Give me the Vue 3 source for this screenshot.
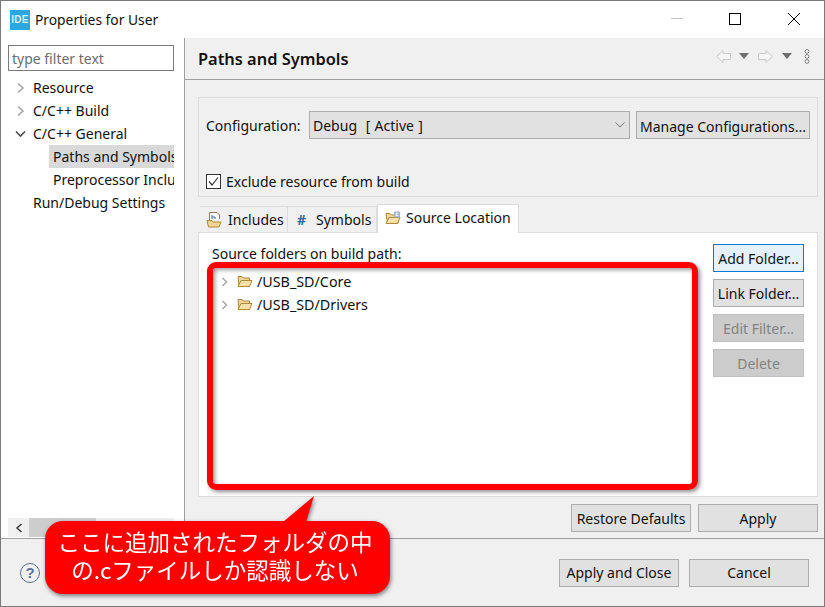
<template>
  <div class="win">
    <header class="titlebar">
      <span class="logo">IDE</span>
      <span class="wintitle">Properties for User</span>
      <div class="winctl">
        <svg class="ctl" width="58" height="38" viewBox="0 0 58 38"><path d="M1 18.500H13" stroke="#c4c4c4" fill="none"/></svg>
        <svg class="ctl" width="59" height="38" viewBox="0 0 59 38"><rect x="1.500" y="13.500" width="11" height="11" stroke="#000" fill="none"/></svg>
        <svg class="ctl" width="25" height="38" viewBox="0 0 25 38"><path d="M1 13L13 25M13 13L1 25" stroke="#000" fill="none"/></svg>
      </div>
    </header>
    <div class="main">
      <aside class="side">
        <div class="filter">type filter text</div>
        <ul class="tree">
          <li v-for="n in nav" :key="n.label" class="navrow" :class="{ sel: n.sel, deep: n.deep }">
            <svg v-if="n.state" class="navchev" width="12" height="12" viewBox="0 0 12 12">
              <path v-if="n.state === 'closed'" d="M3 1.500L8 6L3 10.500" stroke="#a6a6a6" stroke-width="1.600" fill="none"/>
              <path v-else d="M1 3.500L5.500 8L10 3.500" stroke="#4d4d4d" stroke-width="1.600" fill="none"/>
            </svg>
            <span class="navlabel">{{ n.label }}</span>
          </li>
        </ul>
        <div class="hscroll">
          <span class="harrow"><svg width="8" height="10" viewBox="0 0 8 10"><path d="M6.500 1L2 5L6.500 9" stroke="#404040" stroke-width="1.600" fill="none"/></svg></span>
          <span class="hthumb"></span>
        </div>
      </aside>
      <section class="right">
        <div class="pagehead">
          <h1 class="pagetitle">Paths and Symbols</h1>
          <div class="navtools">
            <svg width="15" height="13" viewBox="0 0 15 13"><path d="M7 0.500L0.700 6.500L7 12.500V9.500H14.500V3.500H7Z" stroke="#c8c8c8" fill="#f6f6f6"/></svg>
            <svg class="tri" width="10" height="6" viewBox="0 0 10 6"><path d="M0 0H10L5 6Z" fill="#6e6e6e"/></svg>
            <svg class="fwd" width="15" height="13" viewBox="0 0 15 13"><path d="M8 0.500L14.300 6.500L8 12.500V9.500H0.500V3.500H8Z" stroke="#c8c8c8" fill="#f6f6f6"/></svg>
            <svg class="tri tri2" width="10" height="6" viewBox="0 0 10 6"><path d="M0 0H10L5 6Z" fill="#6e6e6e"/></svg>
            <svg class="dots" width="6" height="15" viewBox="0 0 6 15"><g stroke="#7d7d7d" fill="#fff"><circle cx="3" cy="2.500" r="1.900"/><circle cx="3" cy="7.500" r="1.900"/><circle cx="3" cy="12.500" r="1.900"/></g></svg>
          </div>
        </div>
        <div class="content">
          <div class="group">
            <div class="cfgrow">
              <span class="cfglabel">Configuration:</span>
              <div class="select">
                <span class="selval">Debug&nbsp;&nbsp;[ Active ]</span>
                <svg width="10" height="6" viewBox="0 0 10 6"><path d="M0.500 0.500L5 5L9.500 0.500" stroke="#777" fill="none"/></svg>
              </div>
              <button class="btn manage">Manage Configurations...</button>
            </div>
            <label class="check">
              <span class="box"><svg width="13" height="13" viewBox="0 0 13 13"><path d="M2 6.500L5 10L11 2.500" stroke="#333" stroke-width="1.200" fill="none"/></svg></span>
              Exclude resource from build
            </label>
          </div>
          <div class="tabs">
            <div class="tab t1">
              <svg width="17" height="17" viewBox="0 0 17 17"><path d="M3.500 9V1.500H11L13.500 4V8" stroke="#8a7b5c" fill="#fff"/><path d="M6 4V8M6 6H9V8" stroke="#3a6ea5" fill="none"/><path d="M1 9.500H6L7 11H15L13 16H2.500Z" stroke="#b08a3c" fill="#f3d594"/></svg>
              <span>Includes</span>
            </div>
            <div class="tab t2">
              <span class="hash">#</span>
              <span>Symbols</span>
            </div>
            <div class="tab active">
              <svg width="16" height="14" viewBox="0 0 16 14"><path d="M1 2.500H5L6.500 4H13V12.500H2.500Z" stroke="#a8853c" fill="#f3d594"/><path d="M1 12.500L4 6.500H15L12.500 12.500Z" stroke="#b08a3c" fill="#f8e0a8"/><rect x="9" y="0.500" width="6" height="6" rx="1" fill="#9db4d6"/><path d="M13.300 2.300H11.200V4.700H13.300" stroke="#fff" fill="none"/></svg>
              <span>Source Location</span>
            </div>
          </div>
          <div class="pane">
            <div class="srccol">
              <div class="srclabel">Source folders on build path:</div>
              <div class="srcbox">
                <div v-for="f in folders" :key="f" class="srcrow">
                  <svg width="7" height="10" viewBox="0 0 7 10"><path d="M1.500 1L5.500 5L1.500 9" stroke="#a0a0a0" stroke-width="1.300" fill="none"/></svg>
                  <svg class="fold" width="16" height="13" viewBox="0 0 16 13"><path d="M1 1.500H5L6.500 3H12.500V11.500H2Z" stroke="#a8853c" fill="#f3d594"/><path d="M1 11.500L4 5.500H15L12.500 11.500Z" stroke="#b08a3c" fill="#f8e0a8"/></svg>
                  <span class="srcname">{{ f }}</span>
                </div>
                <div class="redframe"></div>
              </div>
            </div>
            <div class="actions">
              <button class="btn act focus">Add Folder...</button>
              <button class="btn act">Link Folder...</button>
              <button class="btn act off">Edit Filter...</button>
              <button class="btn act off">Delete</button>
            </div>
          </div>
          <div class="pagebtns">
            <button class="btn wide">Restore Defaults</button>
            <button class="btn wide">Apply</button>
          </div>
        </div>
      </section>
    </div>
    <footer class="foot">
      <span class="help">?</span>
      <button class="btn wide">Apply and Close</button>
      <button class="btn wide cancel">Cancel</button>
    </footer>
    <div class="callout">
      <svg class="tail" width="34" height="29" viewBox="0 0 34 29"><path d="M0 27L31 1L23 27Z" fill="#ff0000"/></svg>
      <p class="line1">ここに追加されたフォルダの中</p>
      <p class="line2">の.cファイルしか認識しない</p>
    </div>
  </div>
</template>

<script setup>
const nav = [
  { label: 'Resource', state: 'closed' },
  { label: 'C/C++ Build', state: 'closed' },
  { label: 'C/C++ General', state: 'open' },
  { label: 'Paths and Symbols', deep: true, sel: true },
  { label: 'Preprocessor Include Paths', deep: true },
  { label: 'Run/Debug Settings' }
]
const folders = ['/USB_SD/Core', '/USB_SD/Drivers']
</script>

<style>
html, body { margin: 0; padding: 0; background: #fff; }
</style>

<style scoped>
.win {
  position: relative;
  width: 825px;
  height: 607px;
  box-sizing: border-box;
  border: 1px solid #7a7a7a;
  display: flex;
  flex-direction: column;
  background: #f0f0f0;
  overflow: hidden;
  font-family: "Noto Sans", "Open Sans", sans-serif;
  font-size: 14px;
  color: #111;
}
.titlebar {
  height: 37px;
  flex: none;
  background: #fff;
  display: flex;
  align-items: center;
  padding-left: 9px;
}
.logo {
  width: 20px;
  height: 20px;
  background: #2ba8df;
  color: #d8f0fb;
  font: bold 10px/20px "Liberation Sans", sans-serif;
  text-align: center;
  letter-spacing: 0.3px;
}
.wintitle { margin-left: 5px; font-size: 13.800px; }
.winctl { margin-left: auto; display: flex; align-self: flex-start; padding-right: 12px; margin-top: -1px; }
.ctl { display: block; }
.main { height: 500px; flex: none; display: flex; }
.side {
  flex: none;
  box-sizing: border-box;
  background: #fff;
  border-right: 1px solid #a0a0a0;
  width: 184px;
  padding: 7px 10px 1px 7px;
  display: flex;
  flex-direction: column;
}
.filter {
  height: 26px;
  box-sizing: border-box;
  border: 1px solid #7a7a7a;
  padding-left: 3px;
  line-height: 26px;
  color: #6d6d6d;
}
.tree { list-style: none; margin: 5px 0 0; padding: 0; }
.navrow {
  height: 23px;
  line-height: 23px;
  position: relative;
  padding-left: 25px;
  white-space: nowrap;
  overflow: hidden;
}
.navrow.deep { margin-left: 41px; padding-left: 4px; }
.navrow.sel { background: #d9d9d9; }
.navchev { position: absolute; left: 7px; top: 6px; }
.hscroll { margin-top: auto; height: 19px; display: flex; background: #f0f0f0; }
.harrow { width: 21px; display: flex; align-items: center; justify-content: center; }
.hthumb { width: 67px; background: #cdcdcd; }
.right { flex: 1; display: flex; flex-direction: column; min-width: 0; }
.pagehead {
  height: 41px;
  flex: none;
  border-bottom: 1px solid #a0a0a0;
  display: flex;
  align-items: center;
  padding: 0 14px 0 13px;
}
.pagetitle { margin: 0; font-size: 16.400px; font-weight: 600; line-height: 42px; }
.navtools { margin-left: auto; display: flex; align-items: center; margin-top: -5px; }
.tri { margin-left: 8px; }
.fwd { margin-left: 9px; }
.tri2 { margin-left: 9px; }
.dots { margin-left: 12px; }
.content { padding: 17px 6px 0 13px; }
.group {
  height: 100px;
  box-sizing: border-box;
  border: 1px solid #dcdcdc;
  padding: 13px 7px 0 7px;
}
.cfgrow { display: flex; align-items: center; height: 28px; }
.cfglabel { width: 103px; padding-top: 1px; }
.select {
  width: 321px;
  height: 28px;
  box-sizing: border-box;
  border: 1px solid #adadad;
  background: #e1e1e1;
  display: flex;
  align-items: center;
  justify-content: space-between;
  padding: 0 4px 0 3px;
}
.selval { word-spacing: 0.700px; }
.btn {
  font: inherit;
  color: #111;
  height: 28px;
  box-sizing: border-box;
  border: 1px solid #adadad;
  background: #e1e1e1;
  padding: 0;
  display: block;
}
.manage { width: 174px; margin-left: 6px; padding-top: 2px; }
.check { display: flex; align-items: center; margin-top: 32px; height: 20px; }
.box {
  width: 15px;
  height: 15px;
  box-sizing: border-box;
  border: 1px solid #333;
  background: #fff;
  display: flex;
  align-items: center;
  justify-content: center;
  margin-right: 5px;
}
.tabs { display: flex; align-items: flex-end; height: 28px; margin-top: 7px; padding-left: 2px; }
.tab {
  height: 26px;
  box-sizing: border-box;
  border: 1px solid #dcdcdc;
  border-bottom: 0;
  border-left: 0;
  display: flex;
  align-items: center;
  background: #f0f0f0;
  padding-left: 6px;
}
.t1 { width: 88px; gap: 5px; }
.t2 { width: 89px; padding-left: 9px; gap: 10px; }
.hash { color: #2f6a9e; font-weight: 700; }
.active {
  width: 142px;
  background: #fff;
  border-left: 1px solid #dcdcdc;
  padding-left: 7px;
  padding-bottom: 3px;
  gap: 5px;
  position: relative;
  z-index: 1;
  margin-bottom: -1px;
  height: 29px;
}
.pane {
  height: 265px;
  box-sizing: border-box;
  background: #fff;
  border: 1px solid #dcdcdc;
  padding-left: 13px;
  display: flex;
}
.srccol { width: 483px; flex: none; }
.srclabel { padding-top: 12px; height: 18px; line-height: 18px; }
.srcbox {
  position: relative;
  margin-top: 3px;
  height: 221px;
  box-sizing: border-box;
  padding-top: 4px;
  background: #fff;
}
.srcrow { height: 23px; display: flex; align-items: center; padding-left: 9px; }
.fold { margin-left: 9px; margin-right: 4px; }
.srcname { font-size: 14.300px; }
.redframe {
  position: absolute;
  left: -5px;
  right: -3px;
  top: -4px;
  bottom: -3px;
  box-sizing: border-box;
  border: 6px solid #ff0000;
  border-radius: 9px;
  box-shadow: 2px 2px 4px rgba(0, 0, 0, 0.45), inset 2px 2px 4px rgba(0, 0, 0, 0.4);
}
.actions { margin-left: 18px; padding-top: 11px; display: flex; flex-direction: column; gap: 7px; }
.act { width: 91px; }
.focus { background: #e5f1fb; border-color: #0078d7; }
.off { background: #cccccc; border-color: #bfbfbf; color: #838383; }
.pagebtns { display: flex; justify-content: flex-end; gap: 7px; margin-top: 7px; }
.wide { width: 120px; }
.foot {
  flex: 1;
  border-top: 1px solid #a0a0a0;
  display: flex;
  align-items: center;
  padding: 0 15px 0 19px;
}
.help {
  width: 20px;
  height: 20px;
  box-sizing: border-box;
  border: 1.500px solid #5a7198;
  border-radius: 50%;
  color: #5a7198;
  font: bold 15px/17px "Liberation Sans", sans-serif;
  text-align: center;
}
.foot .btn:first-of-type { margin-left: auto; }
.cancel { margin-left: 10px; }
.callout {
  position: absolute;
  left: 44px;
  top: 520px;
  width: 345px;
  height: 73px;
  box-sizing: border-box;
  padding-right: 5px;
  background: #ff0000;
  border-radius: 18px;
  filter: drop-shadow(1px 2px 2px rgba(0, 0, 0, 0.5));
  color: #fff;
  font-family: "Noto Sans CJK JP", sans-serif;
  font-size: 22.500px;
  text-align: center;
}
.tail { position: absolute; left: 238px; top: -26px; }
.callout p { margin: 0; line-height: 28px; white-space: nowrap; position: relative; }
.line1 { padding-top: 6px; }
</style>
